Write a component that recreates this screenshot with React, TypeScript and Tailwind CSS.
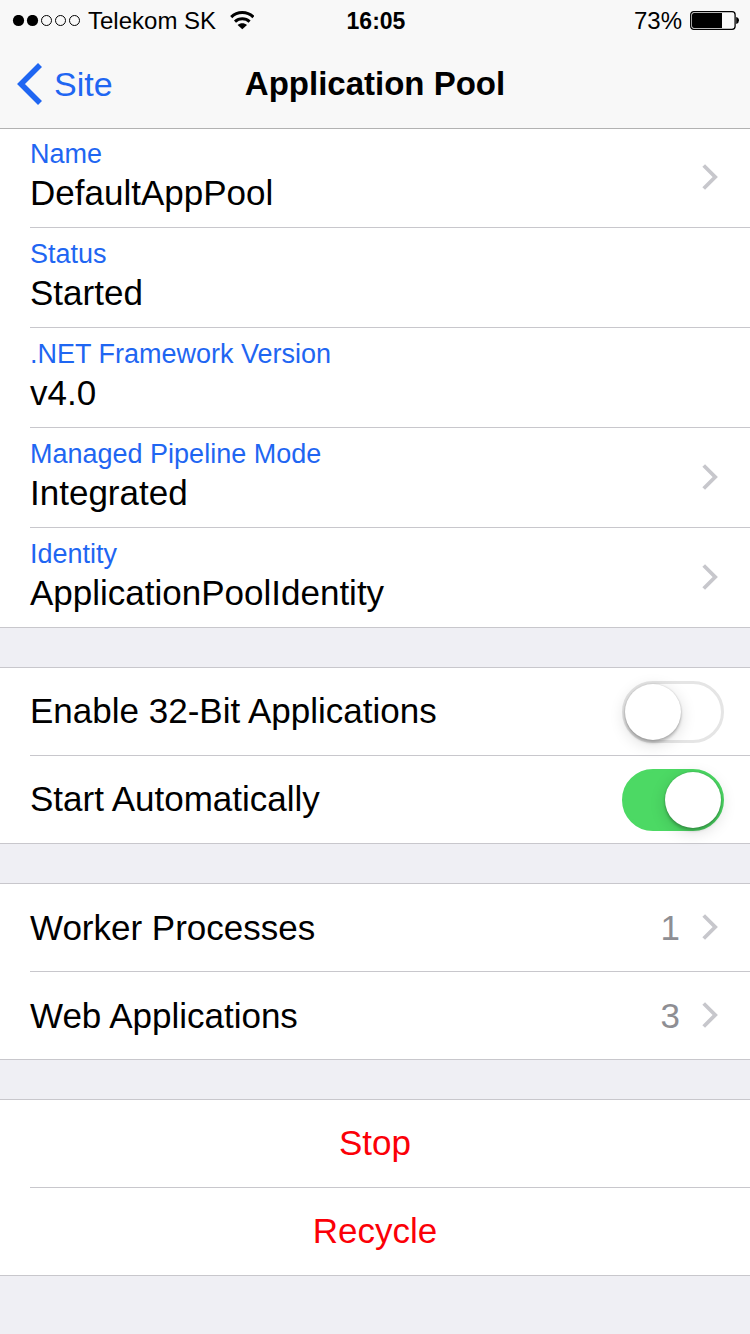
import { useState, type ReactNode } from "react";

function Chevron() {
  return (
    <svg className="h-[27px] w-[18px] shrink-0" viewBox="0 0 18 27" fill="none" aria-hidden="true">
      <path d="M1.7 1.5 13.2 13 1.7 24.5" stroke="#c7c7cc" strokeWidth="3.8" />
    </svg>
  );
}

function Group({ children, first = false }: { children: ReactNode; first?: boolean }) {
  return (
    <section className={`border-b border-[#c8c7cc] bg-white pl-[30px] ${first ? "" : "mt-[39px] border-t"}`}>
      <ul className="divide-y divide-[#c8c7cc]">{children}</ul>
    </section>
  );
}

function DetailRow({ label, value, link = false }: { label: string; value: string; link?: boolean }) {
  const content = (
    <>
      <span className="flex flex-col gap-[3px] pb-1">
        <span className="text-[27px] leading-8 text-[#1f66f2]">{label}</span>
        <span className="text-[35px] leading-10">{value}</span>
      </span>
      {link && <Chevron />}
    </>
  );
  const layout = "flex h-[99px] w-full items-center justify-between pr-[30px] text-left";
  return (
    <li>
      {link ? (
        <button type="button" className={layout}>{content}</button>
      ) : (
        <div className={layout}>{content}</div>
      )}
    </li>
  );
}

function SwitchRow({ label, initial }: { label: string; initial: boolean }) {
  const [on, setOn] = useState(initial);
  return (
    <li>
      <label className="flex h-[87px] items-center justify-between pr-[26px] text-[35px] leading-10">
        <span className="pb-0.5">{label}</span>
        <input
          type="checkbox"
          role="switch"
          checked={on}
          onChange={() => setOn(!on)}
          className="flex h-[62px] w-[102px] shrink-0 appearance-none rounded-full border-3 border-[#e5e5e5] bg-white before:size-14 before:rounded-full before:bg-white before:shadow-[0_3px_3px_rgba(0,0,0,0.2),0_4px_16px_rgba(0,0,0,0.15),0_0_2px_rgba(0,0,0,0.2)] checked:justify-end checked:border-[#4cd964] checked:bg-[#4cd964]"
        />
      </label>
    </li>
  );
}

function CountRow({ label, count }: { label: string; count: number }) {
  return (
    <li>
      <button type="button" className="flex h-[87px] w-full items-center pr-[30px] text-left text-[35px] leading-10">
        <span className="flex-1">{label}</span>
        <span className="mr-[22px] text-[#8e8e93]">{count}</span>
        <Chevron />
      </button>
    </li>
  );
}

function ActionRow({ label }: { label: string }) {
  return (
    <li>
      <button type="button" className="h-[87px] w-full pr-[30px] pb-0.5 text-center text-[35px] leading-10 text-[#fb0007]">
        {label}
      </button>
    </li>
  );
}

function StatusBar() {
  return (
    <div className="grid h-[42px] grid-cols-[1fr_auto_1fr] items-center pr-2.5 pl-3 text-2xl">
      <div className="flex items-center">
        <svg className="mr-[7px] h-3 w-[69px]" viewBox="0 0 69 12" role="img" aria-label="Signal strength">
          <circle cx="6.5" cy="5.5" r="5.6" />
          <circle cx="20.5" cy="5.5" r="5.6" />
          <g fill="none" stroke="#000">
            <circle cx="34.5" cy="5.5" r="5" />
            <circle cx="48.5" cy="5.5" r="5" />
            <circle cx="62.5" cy="5.5" r="5" />
          </g>
        </svg>
        <span>Telekom SK</span>
        <svg className="ml-3.5 h-5 w-6" viewBox="0 0 24 20" role="img" aria-label="Wi-Fi">
          <g fill="none" stroke="#000" strokeWidth="3">
            <path d="M1.2 6.1C7.4 .1 17.2 .1 23.4 6.1" />
            <path d="M5 10.6C9.2 6.8 15.4 6.8 19.6 10.6" />
          </g>
          <path d="M7.6 13.9C10.3 11.7 14.3 11.7 17 13.9L12.3 18.2Z" />
        </svg>
      </div>
      <span className="text-[23px] font-bold">16:05</span>
      <div className="flex items-center justify-end gap-2">
        <span>73%</span>
        <svg className="h-5 w-[50px]" viewBox="0 0 50 20" role="img" aria-label="Battery">
          <rect x=".7" y=".7" width="44.4" height="17.6" rx="3" fill="none" stroke="#000" strokeWidth="1.3" />
          <path d="M4 2.1H32V17H4Q2 17 2 15V4.1Q2 2.1 4 2.1Z" />
          <path d="M46.2 6Q49 6.8 49 9.5T46.2 13Z" />
        </svg>
      </div>
    </div>
  );
}

export default function App() {
  return (
    <div className="min-h-screen bg-[#efeff4] font-['Liberation_Sans',Arial,sans-serif] text-black">
      <header className="relative z-10 bg-[#f8f8f8] shadow-[0_1px_0_#b2b2b2]">
        <StatusBar />
        <nav className="grid h-[86px] grid-cols-[1fr_auto_1fr] items-center pb-0.5 leading-10">
          <a href="#site" className="flex items-center gap-3 pl-4 text-[34px] text-[#1f66f2]">
            <svg className="h-[42px] w-[26px]" viewBox="0 0 26 42" fill="none" aria-hidden="true">
              <path d="M24 2 5 21 24 40" stroke="currentColor" strokeWidth="5.6" />
            </svg>
            Site
          </a>
          <h1 className="text-[33px] font-bold">Application Pool</h1>
        </nav>
      </header>
      <main>
        <Group first>
          <DetailRow label="Name" value="DefaultAppPool" link />
          <DetailRow label="Status" value="Started" />
          <DetailRow label=".NET Framework Version" value="v4.0" />
          <DetailRow label="Managed Pipeline Mode" value="Integrated" link />
          <DetailRow label="Identity" value="ApplicationPoolIdentity" link />
        </Group>
        <Group>
          <SwitchRow label="Enable 32-Bit Applications" initial={false} />
          <SwitchRow label="Start Automatically" initial={true} />
        </Group>
        <Group>
          <CountRow label="Worker Processes" count={1} />
          <CountRow label="Web Applications" count={3} />
        </Group>
        <Group>
          <ActionRow label="Stop" />
          <ActionRow label="Recycle" />
        </Group>
      </main>
    </div>
  );
}
